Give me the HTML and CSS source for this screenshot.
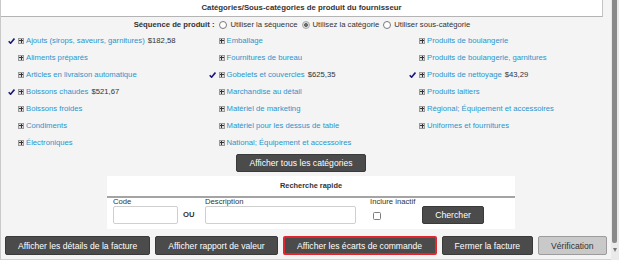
FILE: index.html
```html
<!DOCTYPE html>
<html lang="fr">
<head>
    <meta charset="UTF-8">
    <meta name="viewport" content="width=device-width, initial-scale=1.0">
    <title>Catégories du fournisseur</title>
    <link rel="stylesheet" href="styles.css">
</head>
<body>
    <div class="window">
        <div class="panel">
            <!-- Header -->
            <div class="title">Catégories/Sous-catégories de produit du fournisseur</div>

            <!-- Sequence choice -->
            <div class="sequence">
                <span class="seq-label">Séquence de produit :</span>
                <label><input type="radio" name="seq"> Utiliser la séquence</label>
                <label><input type="radio" name="seq" checked> Utilisez la catégorie</label>
                <label><input type="radio" name="seq"> Utiliser sous-catégorie</label>
            </div>

            <!-- Category list -->
            <ul class="cats">
                <li class="picked"><span class="tick"><svg width="7" height="6" viewBox="0 0 7 6"><path d="M0.7 3.2 L2.6 5.2 L6.4 0.6" fill="none" stroke="#1c1c78" stroke-width="1.6"/></svg></span><span class="expand"></span><a href="#">Ajouts (sirops, saveurs, garnitures)</a><span class="amount">$182,58</span></li>
                <li><span class="tick"></span><span class="expand"></span><a href="#">Aliments préparés</a></li>
                <li><span class="tick"></span><span class="expand"></span><a href="#">Articles en livraison automatique</a></li>
                <li class="picked"><span class="tick"><svg width="7" height="6" viewBox="0 0 7 6"><path d="M0.7 3.2 L2.6 5.2 L6.4 0.6" fill="none" stroke="#1c1c78" stroke-width="1.6"/></svg></span><span class="expand"></span><a href="#">Boissons chaudes</a><span class="amount">$521,67</span></li>
                <li><span class="tick"></span><span class="expand"></span><a href="#">Boissons froides</a></li>
                <li><span class="tick"></span><span class="expand"></span><a href="#">Condiments</a></li>
                <li><span class="tick"></span><span class="expand"></span><a href="#">Électroniques</a></li>

                <li><span class="tick"></span><span class="expand"></span><a href="#">Emballage</a></li>
                <li><span class="tick"></span><span class="expand"></span><a href="#">Fournitures de bureau</a></li>
                <li class="picked"><span class="tick"><svg width="7" height="6" viewBox="0 0 7 6"><path d="M0.7 3.2 L2.6 5.2 L6.4 0.6" fill="none" stroke="#1c1c78" stroke-width="1.6"/></svg></span><span class="expand"></span><a href="#">Gobelets et couvercles</a><span class="amount">$625,35</span></li>
                <li><span class="tick"></span><span class="expand"></span><a href="#">Marchandise au détail</a></li>
                <li><span class="tick"></span><span class="expand"></span><a href="#">Matériel de marketing</a></li>
                <li><span class="tick"></span><span class="expand"></span><a href="#">Matériel pour les dessus de table</a></li>
                <li><span class="tick"></span><span class="expand"></span><a href="#">National; Équipement et accessoires</a></li>

                <li><span class="tick"></span><span class="expand"></span><a href="#">Produits de boulangerie</a></li>
                <li><span class="tick"></span><span class="expand"></span><a href="#">Produits de boulangerie, garnitures</a></li>
                <li class="picked"><span class="tick"><svg width="7" height="6" viewBox="0 0 7 6"><path d="M0.7 3.2 L2.6 5.2 L6.4 0.6" fill="none" stroke="#1c1c78" stroke-width="1.6"/></svg></span><span class="expand"></span><a href="#">Produits de nettoyage</a><span class="amount">$43,29</span></li>
                <li><span class="tick"></span><span class="expand"></span><a href="#">Produits laitiers</a></li>
                <li><span class="tick"></span><span class="expand"></span><a href="#">Régional; Équipement et accessoires</a></li>
                <li><span class="tick"></span><span class="expand"></span><a href="#">Uniformes et fournitures</a></li>
            </ul>

            <div class="all-row">
                <button class="btn btn-all">Afficher tous les catégories</button>
            </div>

            <!-- Quick search -->
            <div class="quick">
                <div class="quick-title">Recherche rapide</div>
                <div class="quick-body">
                    <div class="field field-code">
                        <span class="field-label">Code</span>
                        <input type="text" class="text-input">
                    </div>
                    <div class="or">OU</div>
                    <div class="field field-desc">
                        <span class="field-label">Description</span>
                        <input type="text" class="text-input">
                    </div>
                    <div class="field field-inactive">
                        <span class="field-label">Inclure inactif</span>
                        <span class="check-wrap"><input type="checkbox" class="check"></span>
                    </div>
                    <button class="btn btn-search">Chercher</button>
                </div>
            </div>

            <!-- Footer actions -->
            <div class="actions">
                <button class="btn">Afficher les détails de la facture</button>
                <button class="btn">Afficher rapport de valeur</button>
                <button class="btn btn-flagged">Afficher les écarts de commande</button>
                <button class="btn">Fermer la facture</button>
                <button class="btn btn-light">Vérification</button>
            </div>
        </div>

        <div class="scrollbar">
            <div class="thumb"></div>
            <div class="arrow"></div>
        </div>
    </div>
</body>
</html>
```

FILE: styles.css
```css
/* Global */
body {
    margin: 0;
    font-family: "Liberation Sans", Arial, sans-serif;
    font-size: 7.7px;
    color: #333;
    background: #f4f4f4;
}

.window {
    display: flex;
    width: 619px;
    height: 260px;
    overflow: hidden;
}

.panel {
    width: 611px;
    flex: none;
    height: 260px;
    box-sizing: border-box;
    border-left: 1px solid #c9c9c9;
    border-bottom: 1px solid #d2d2d2;
    background: #f4f4f4;
}

/* Header */
.title {
    margin-right: 8px;
    height: 16px;
    line-height: 16px;
    background: #fff;
    border-bottom: 1px solid #b4b4b4;
    border-right: 1px solid #c4c4c4;
    text-align: center;
    font-weight: bold;
    font-size: 7.8px;
    color: #333;
}

/* Sequence radios */
.sequence {
    display: flex;
    justify-content: center;
    align-items: center;
    height: 13px;
    margin-top: 1px;
    padding-right: 8px;
}

.seq-label {
    font-weight: bold;
    margin-right: 1px;
}

.sequence label {
    display: flex;
    align-items: center;
}

.sequence input {
    appearance: none;
    width: 8px;
    height: 8px;
    margin: 0 3px 0 4px;
    border: 1px solid #7a7a7a;
    border-radius: 50%;
    background: #fff;
    box-sizing: border-box;
}

.sequence input:checked {
    border-color: #a8a8a8;
    background: radial-gradient(circle, #6a6a6a 0 1.6px, #dcdcdc 2.2px);
}

/* Category grid */
.cats {
    list-style: none;
    margin: 1px 0 0;
    padding: 0 0 0 6px;
    display: grid;
    grid-template-columns: repeat(3, 200.5px);
    grid-template-rows: repeat(7, 17px);
    grid-auto-flow: column;
}

.cats li {
    display: flex;
    align-items: center;
    white-space: nowrap;
}

.tick {
    width: 11px;
    flex: none;
    display: flex;
    padding-left: 1px;
    box-sizing: border-box;
}

.expand {
    position: relative;
    width: 6px;
    height: 6px;
    flex: none;
    margin-right: 2px;
    box-sizing: border-box;
    border: 1px solid #9a9a9a;
    background: #dedede;
}

.expand::before,
.expand::after {
    content: "";
    position: absolute;
    background: #333;
}

.expand::before {
    left: 0;
    top: 1.5px;
    width: 4px;
    height: 1px;
}

.expand::after {
    left: 1.5px;
    top: 0;
    width: 1px;
    height: 4px;
}

.cats a {
    color: #2a94cc;
    text-decoration: none;
}

.amount {
    margin-left: 3px;
    color: #333;
}

/* Buttons */
.btn {
    flex: none;
    white-space: nowrap;
    font-family: "Liberation Sans", Arial, sans-serif;
    font-size: 8.6px;
    height: 19px;
    padding: 0 12px;
    color: #fff;
    background: #4b4b4b;
    border: 1px solid #3a3a3a;
    border-radius: 2px;
    cursor: pointer;
}

.all-row {
    display: flex;
    justify-content: center;
    margin-top: 3px;
    padding-right: 8px;
}

.btn-all {
    height: 18px;
    width: 130px;
    padding: 0;
    margin-right: 2px;
}

/* Quick search */
.quick {
    width: 408px;
    margin: 4px 0 0 106px;
    background: #fff;
}

.quick-title {
    height: 20px;
    line-height: 20px;
    text-align: center;
    font-weight: bold;
    font-size: 7.4px;
    border-bottom: 2px solid #a4a4a4;
}

.quick-body {
    display: flex;
    align-items: flex-end;
    padding: 0 0 5px 6px;
}

.field {
    display: flex;
    flex-direction: column;
}

.field-label {
    line-height: 8px;
}

.text-input {
    height: 18px;
    margin: 0;
    box-sizing: border-box;
    border: 1px solid #cfcfcf;
    border-radius: 2px;
    background: #fff;
}

.field-code .text-input {
    width: 65px;
}

.field-desc .text-input {
    width: 151px;
}

.or {
    width: 27px;
    box-sizing: border-box;
    padding-left: 5px;
    line-height: 18px;
    font-weight: bold;
}

.field-inactive {
    width: 52px;
    margin-left: 14px;
}

.check-wrap {
    height: 18px;
    display: flex;
    align-items: center;
    padding-left: 3px;
}

.check {
    appearance: none;
    width: 8px;
    height: 8px;
    margin: 2px 0 0;
    box-sizing: border-box;
    border: 1px solid #7d7d7d;
    border-radius: 1.5px;
    background: #fff;
}

.btn-search {
    width: 62px;
    height: 18px;
    padding: 0;
    font-size: 8.7px;
}

/* Footer */
.actions {
    display: flex;
    gap: 5px;
    margin-top: 7px;
    padding-left: 4px;
}

.btn-flagged {
    padding: 0 12.5px;
    border: 2px solid #e3262d;
}

.btn-light {
    color: #333;
    background: #c9c9c9;
    border-color: #9c9c9c;
}

/* Fake scrollbar */
.scrollbar {
    width: 8px;
    flex: none;
    height: 260px;
    background: #eaeaea;
    display: flex;
    flex-direction: column;
    align-items: flex-start;
}

.thumb {
    width: 5px;
    height: 243px;
    margin-left: 1px;
    background: #8a8a8a;
    border-radius: 0 0 2px 2px;
}

.arrow {
    margin: 5px 0 0 2px;
    width: 0;
    height: 0;
    border-left: 2.5px solid transparent;
    border-right: 2.5px solid transparent;
    border-top: 4px solid #777;
}
```
